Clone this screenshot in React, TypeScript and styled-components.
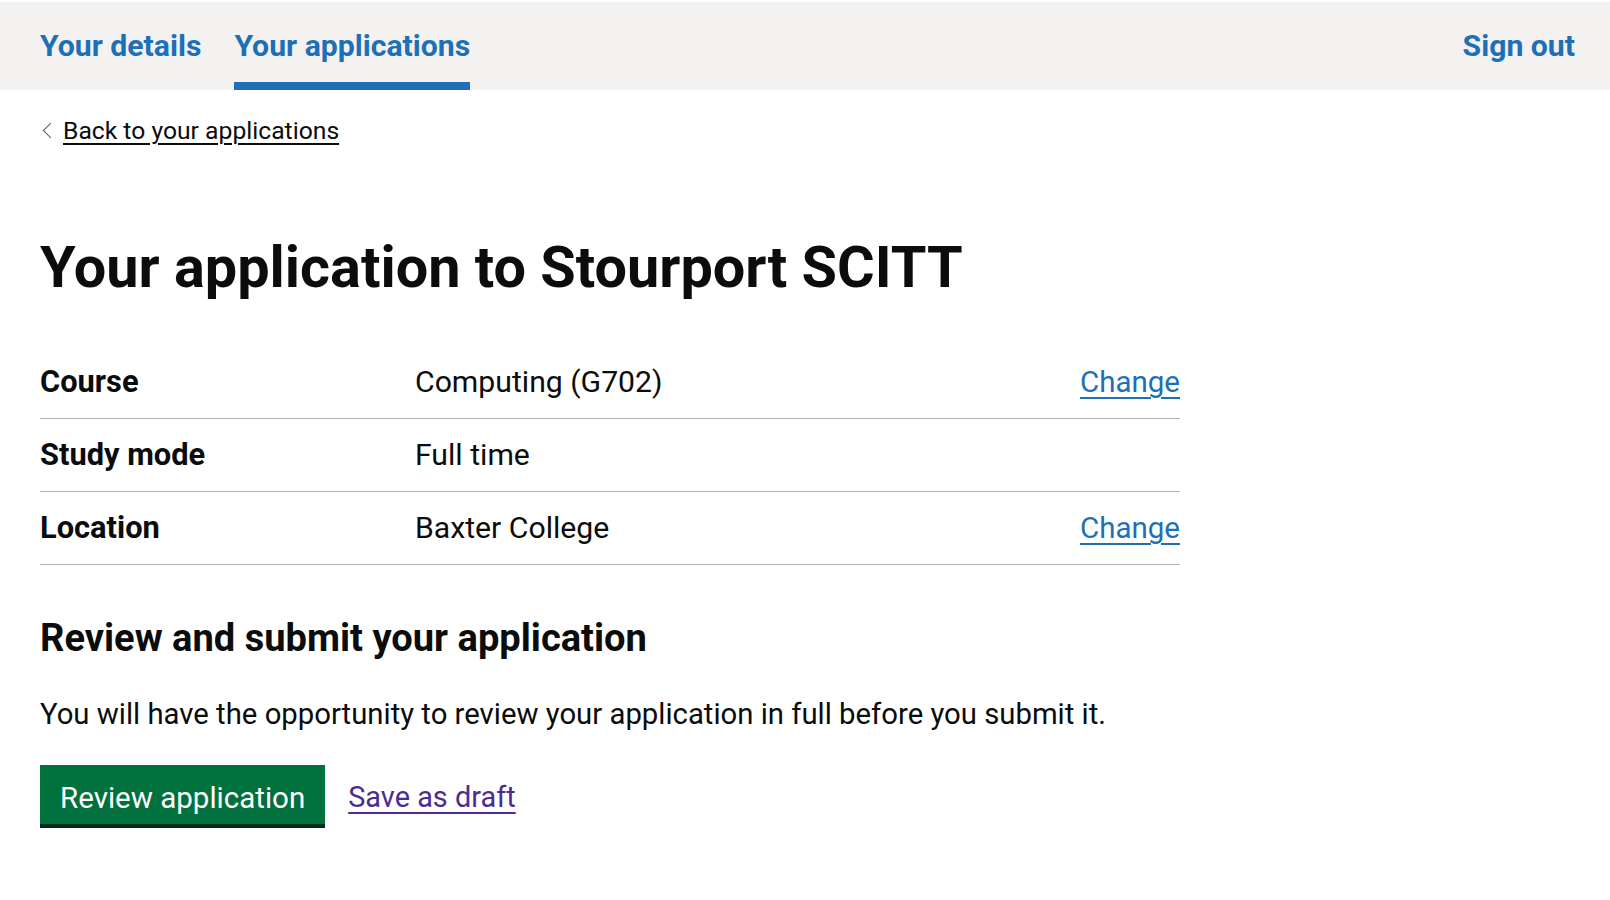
import React from "react";
import styled, { createGlobalStyle } from "styled-components";

const GlobalStyle = createGlobalStyle`
  html, body {
    margin: 0;
    padding: 0;
    background: #ffffff;
  }
  body {
    font-family: Roboto, "Liberation Sans", Arial, sans-serif;
    color: #0b0c0c;
    -webkit-font-smoothing: antialiased;
  }
  * { box-sizing: border-box; }
`;

const Page = styled.div`
  padding-top: 2px;
  min-height: 900px;
`;

const Header = styled.header`
  height: 88px;
  background: #f3f2f1;
  display: flex;
  align-items: stretch;
  justify-content: space-between;
  padding: 0 35px 0 40px;
`;

const NavList = styled.nav`
  display: flex;
  align-items: stretch;
  gap: 33px;
`;

const NavItem = styled.a<{ $active?: boolean }>`
  display: flex;
  align-items: center;
  font-size: 30.2px;
  font-weight: 700;
  line-height: 36px;
  color: #1d70b8;
  text-decoration: none;
  box-shadow: ${(p) => (p.$active ? "inset 0 -8px 0 #1d70b8" : "none")};
`;

const Main = styled.main`
  padding: 26px 40px 0 40px;
  display: flex;
  flex-direction: column;
  align-items: flex-start;
`;

const BackLink = styled.a`
  position: relative;
  display: inline-block;
  padding-left: 23px;
  font-size: 24.7px;
  line-height: 30px;
  color: #0b0c0c;
  text-decoration: underline;
  text-decoration-thickness: 1.5px;
  text-underline-offset: 4px;

  &::before {
    content: "";
    position: absolute;
    left: 5px;
    top: 9px;
    width: 10px;
    height: 10px;
    border-top: 1.5px solid #505a5f;
    border-left: 1.5px solid #505a5f;
    transform: rotate(-45deg);
  }
`;

const Title = styled.h1`
  margin: 90px 0 0 0;
  font-size: 57.6px;
  line-height: 64px;
  font-weight: 700;
`;

const SummaryList = styled.dl`
  margin: 46px 0 0 0;
  width: 1140px;
`;

const SummaryRow = styled.div`
  display: grid;
  grid-template-columns: 375px 1fr auto;
  align-items: baseline;
  padding: 16px 0;
  border-bottom: 1px solid #b1b4b6;
`;

const Key = styled.dt`
  margin: 0;
  font-size: 30.8px;
  line-height: 40px;
  font-weight: 700;
`;

const Value = styled.dd`
  margin: 0;
  font-size: 30.2px;
  line-height: 40px;
`;

const Actions = styled.dd`
  margin: 0;
  font-size: 29.5px;
  line-height: 40px;
  text-align: right;
`;

const Link = styled.a<{ $visited?: boolean }>`
  color: ${(p) => (p.$visited ? "#4c2c92" : "#1d70b8")};
  text-decoration: underline;
  text-decoration-thickness: 2px;
  text-underline-offset: 5px;
`;

const SubHeading = styled.h2`
  margin: 50px 0 0 0;
  font-size: 38.1px;
  line-height: 46px;
  font-weight: 700;
`;

const Body = styled.p`
  margin: 33px 0 0 0;
  font-size: 29.3px;
  line-height: 40px;
`;

const ButtonGroup = styled.div`
  margin-top: 31px;
  display: flex;
  align-items: flex-start;
  gap: 23px;
`;

const Button = styled.button`
  font-family: inherit;
  font-size: 29.5px;
  line-height: 35px;
  color: #ffffff;
  background: #00703c;
  border: none;
  border-radius: 0;
  padding: 16px 20px 8px 20px;
  box-shadow: 0 4px 0 #002d18;
  cursor: pointer;
`;

const InlineLink = styled(Link)`
  margin-top: 15px;
  font-size: 28.9px;
  line-height: 35px;
`;

const rows = [
  { key: "Course", value: "Computing (G702)", action: true },
  { key: "Study mode", value: "Full time", action: false },
  { key: "Location", value: "Baxter College", action: true },
];

export default function App() {
  return (
    <Page>
      <GlobalStyle />
      <Header>
        <NavList>
          <NavItem href="#">Your details</NavItem>
          <NavItem href="#" $active>
            Your applications
          </NavItem>
        </NavList>
        <NavList>
          <NavItem href="#">Sign out</NavItem>
        </NavList>
      </Header>
      <Main>
        <BackLink href="#">Back to your applications</BackLink>
        <Title>Your application to Stourport SCITT</Title>
        <SummaryList>
          {rows.map((r) => (
            <SummaryRow key={r.key}>
              <Key>{r.key}</Key>
              <Value>{r.value}</Value>
              <Actions>{r.action ? <Link href="#">Change</Link> : null}</Actions>
            </SummaryRow>
          ))}
        </SummaryList>
        <SubHeading>Review and submit your application</SubHeading>
        <Body>
          You will have the opportunity to review your application in full
          before you submit it.
        </Body>
        <ButtonGroup>
          <Button>Review application</Button>
          <InlineLink href="#" $visited>
            Save as draft
          </InlineLink>
        </ButtonGroup>
      </Main>
    </Page>
  );
}
